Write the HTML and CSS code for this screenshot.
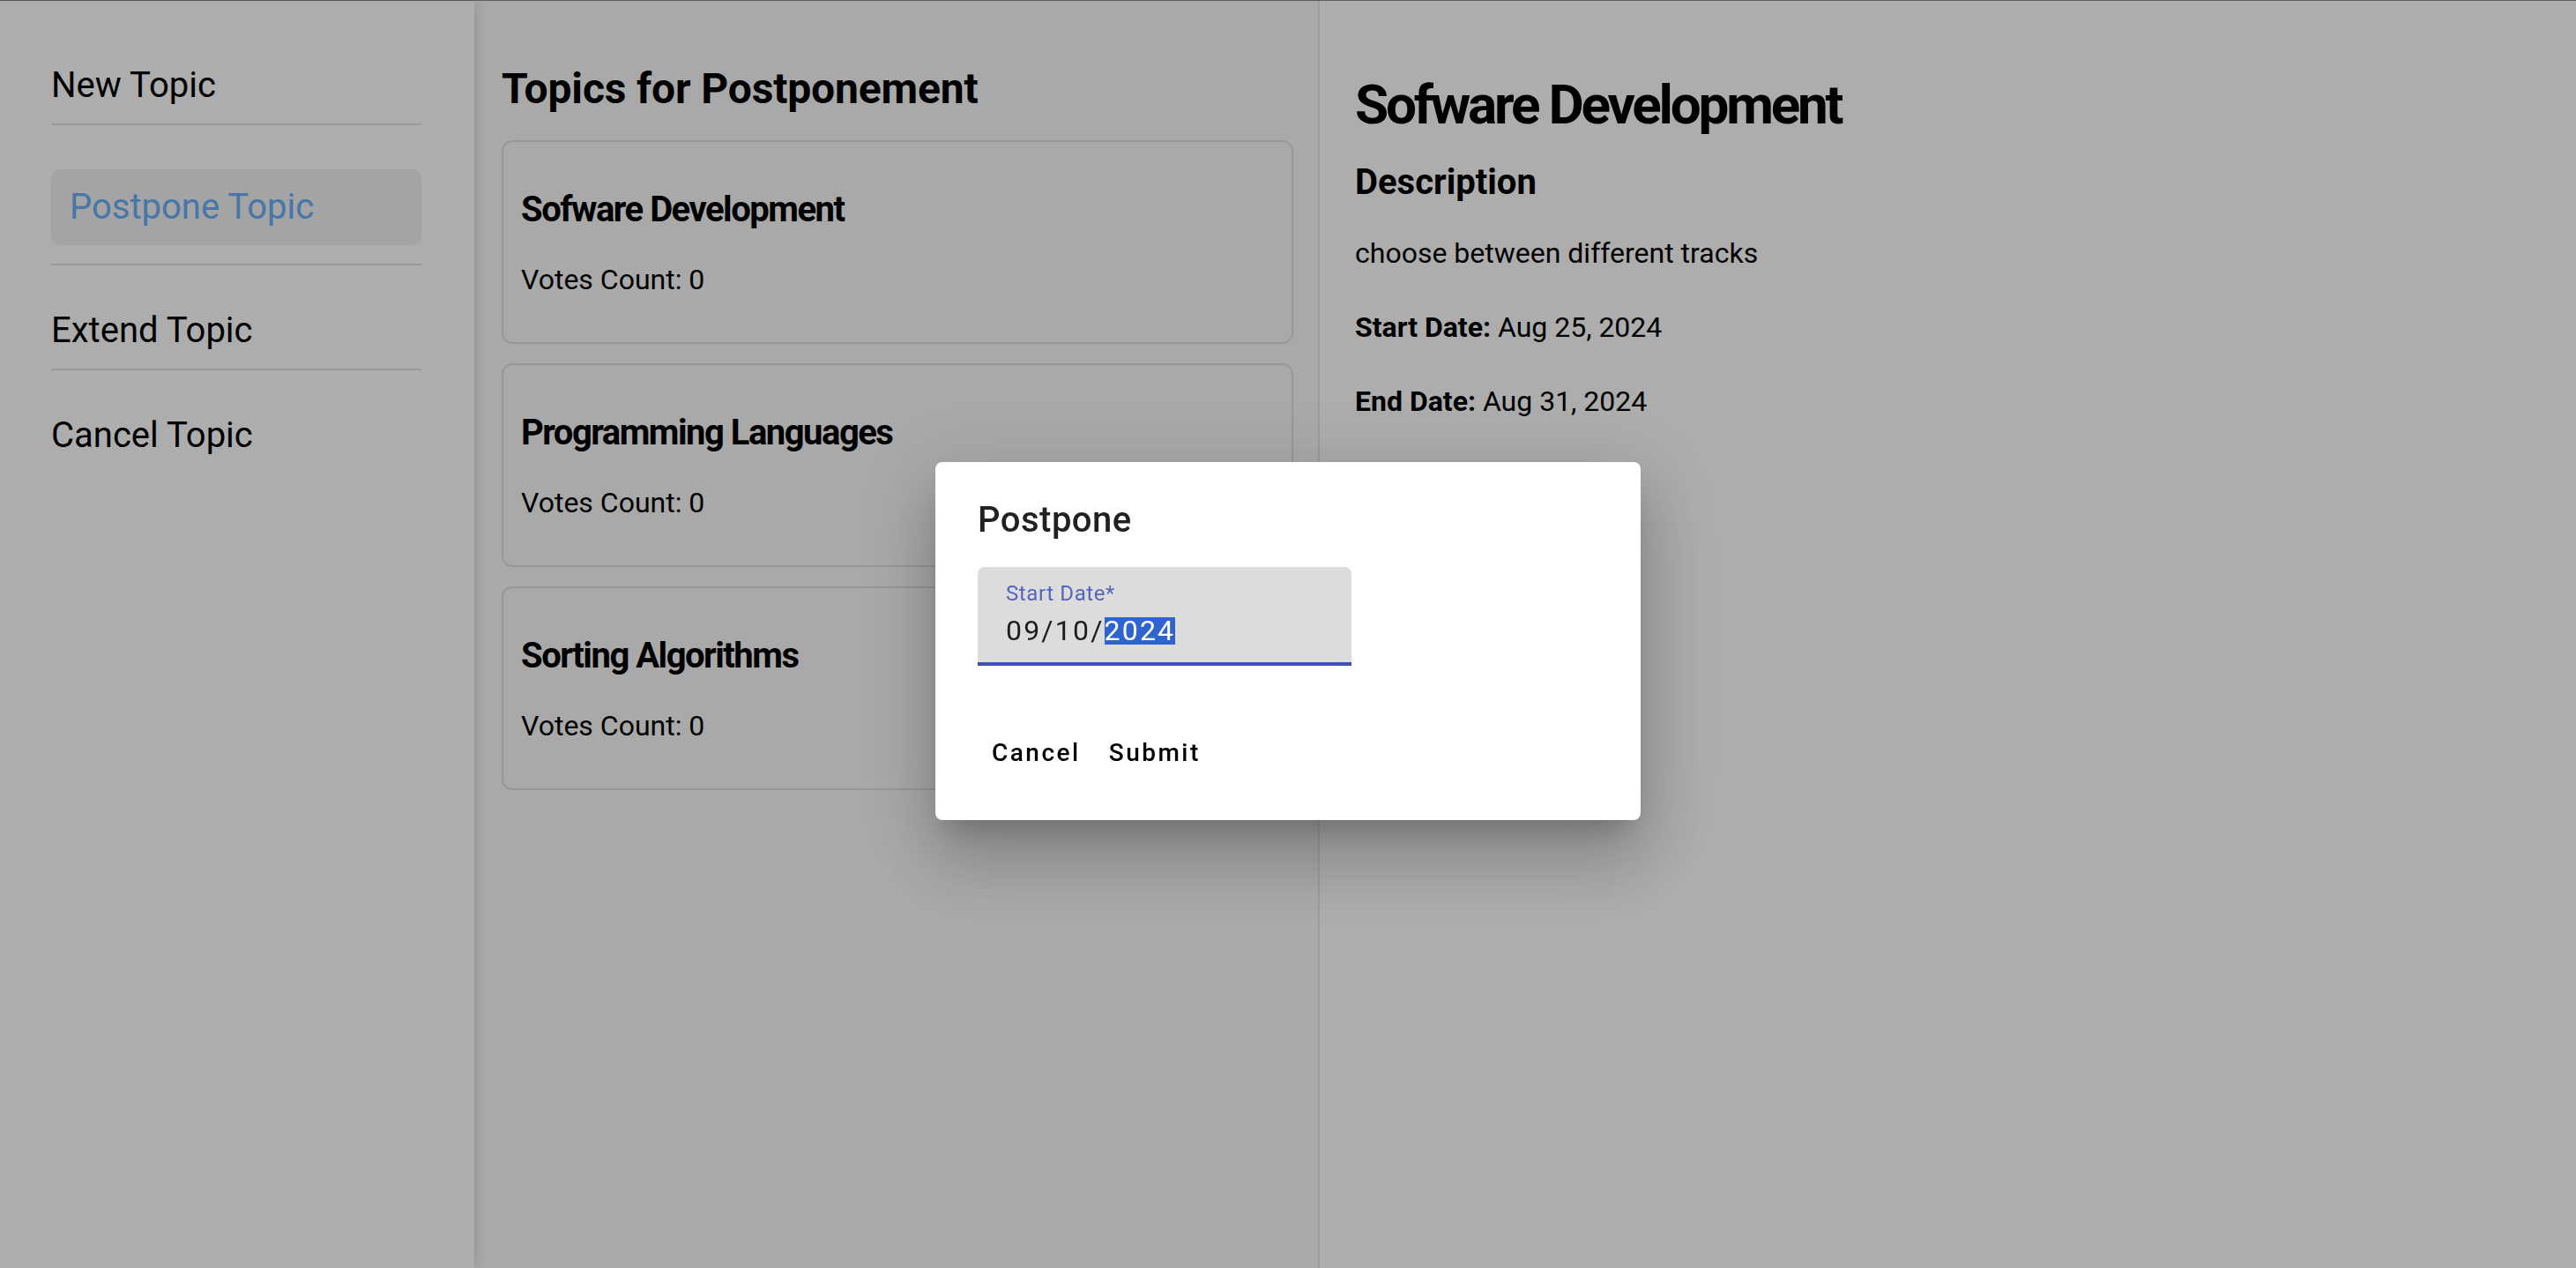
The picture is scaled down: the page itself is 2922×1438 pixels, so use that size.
FILE: index.html
```html
<!DOCTYPE html>
<html lang="en">
<head>
<meta charset="utf-8">
<title>Topics</title>
<link rel="stylesheet" href="styles.css">
</head>
<body>
<div class="app">
  <nav class="sidebar">
    <a class="nav-item">New Topic</a>
    <div class="sep"></div>
    <a class="nav-item active">Postpone Topic</a>
    <div class="sep"></div>
    <a class="nav-item">Extend Topic</a>
    <div class="sep"></div>
    <a class="nav-item">Cancel Topic</a>
  </nav>
  <main class="list-panel">
    <h2 class="list-title">Topics for Postponement</h2>
    <div class="card">
      <h3 class="card-title">Sofware Development</h3>
      <p class="card-votes">Votes Count: 0</p>
    </div>
    <div class="card">
      <h3 class="card-title">Programming Languages</h3>
      <p class="card-votes">Votes Count: 0</p>
    </div>
    <div class="card">
      <h3 class="card-title">Sorting Algorithms</h3>
      <p class="card-votes">Votes Count: 0</p>
    </div>
  </main>
  <section class="detail">
    <h1 class="detail-title">Sofware Development</h1>
    <h3 class="detail-sub">Description</h3>
    <p class="detail-line">choose between different tracks</p>
    <p class="detail-line"><b>Start Date:</b> Aug 25, 2024</p>
    <p class="detail-line"><b>End Date:</b> Aug 31, 2024</p>
  </section>
</div>
<div class="backdrop">
  <div class="dialog">
    <h2 class="dialog-title">Postpone</h2>
    <div class="dialog-content">
      <div class="field">
        <div class="field-label">Start Date*</div>
        <div class="field-value">09/10/<span class="sel">2024</span></div>
      </div>
    </div>
    <div class="dialog-actions">
      <button class="btn">Cancel</button>
      <button class="btn">Submit</button>
    </div>
  </div>
</div>
</body>
</html>
```
FILE: styles.css
```css
* { box-sizing: border-box; }
html, body { margin: 0; padding: 0; }
body {
  font-family: Roboto, "Liberation Sans", sans-serif;
  color: #000;
  background: #fff;
  overflow: hidden;
}
.app {
  display: grid;
  grid-template-columns: 538px 959px 1fr;
  height: 100vh;
  border-top: 1px solid #8a8a8a;
}
.sidebar {
  position: relative;
  z-index: 1;
  background: #fff;
  padding: 22px 60px 0 58px;
  display: flex;
  flex-direction: column;
  box-shadow: 3px 0 12px rgba(0,0,0,0.12);
}
.nav-item {
  display: block;
  font-size: 40px;
  line-height: 48px;
  padding: 19px 0;
  margin-top: 31px;
  color: #000;
}
.nav-item.active {
  margin-top: 50px;
  margin-bottom: 21px;
  padding: 19px 21px;
  background: #f2f2f2;
  border-radius: 10px;
  color: #6aaef8;
}
.sep {
  height: 2px;
  background: #e2e2e2;
}
.list-panel {
  background: #fafafa;
  border-right: 2px solid #e8e8e8;
  padding: 72px 28px 0 31px;
}
.list-title {
  margin: 0 0 30px;
  font-size: 48px;
  line-height: 56px;
  font-weight: 700;
  letter-spacing: -0.15px;
}
.card {
  border: 2px solid #e0e0e0;
  border-radius: 12px;
  padding: 53px 20px 52px;
  margin-bottom: 22px;
}
.card-title {
  margin: 0 0 36px;
  font-size: 40px;
  line-height: 48px;
  font-weight: 700;
  letter-spacing: -1.5px;
}
.card-votes {
  margin: 0;
  font-size: 32px;
  line-height: 38px;
}
.detail {
  background: #fff;
  padding: 80px 40px 0 40px;
}
.detail-title {
  margin: 0 0 27px;
  font-size: 62px;
  line-height: 75px;
  font-weight: 700;
  letter-spacing: -3.2px;
}
.detail-sub {
  margin: 0 0 37px;
  font-size: 40px;
  line-height: 48px;
  font-weight: 700;
}
.detail-line {
  margin: 0 0 46px;
  font-size: 32px;
  line-height: 38px;
}
.backdrop {
  position: fixed;
  inset: 0;
  z-index: 10;
  background: rgba(0,0,0,0.32);
  display: flex;
  align-items: center;
  justify-content: center;
}
.dialog {
  width: 800px;
  margin-top: 16px;
  background: #fff;
  border-radius: 8px;
  padding: 34px 0 40px;
  box-shadow: 0 22px 30px -14px rgba(0,0,0,0.2), 0 48px 76px 6px rgba(0,0,0,0.14), 0 18px 92px 16px rgba(0,0,0,0.12);
}
.dialog-title {
  margin: 0;
  padding: 0 48px;
  font-size: 40px;
  line-height: 64px;
  font-weight: 500;
  letter-spacing: 0.5px;
  color: rgba(0,0,0,0.87);
}
.dialog-content {
  padding: 21px 48px 0;
}
.field {
  width: 424px;
  height: 112px;
  background: #dcdcdc;
  border-radius: 8px 8px 0 0;
  border-bottom: 4px solid #3f51b5;
  padding: 16px 32px 0;
}
.field-label {
  font-size: 24px;
  line-height: 28px;
  letter-spacing: 0.6px;
  color: #5565bf;
}
.field-value {
  margin-top: 9px;
  font-size: 32px;
  line-height: 38px;
  letter-spacing: 2.2px;
  color: rgba(0,0,0,0.87);
}
.sel {
  display: inline-block;
  line-height: 31px;
  background: #2f64d0;
  color: #fff;
}
.dialog-actions {
  display: flex;
  padding: 63px 48px 0;
}
.btn {
  font-family: Roboto, "Liberation Sans", sans-serif;
  font-size: 28px;
  font-weight: 500;
  line-height: 72px;
  height: 72px;
  letter-spacing: 2.5px;
  padding: 0 16px;
  border: none;
  background: none;
  color: #000;
  min-width: 128px;
}
```
